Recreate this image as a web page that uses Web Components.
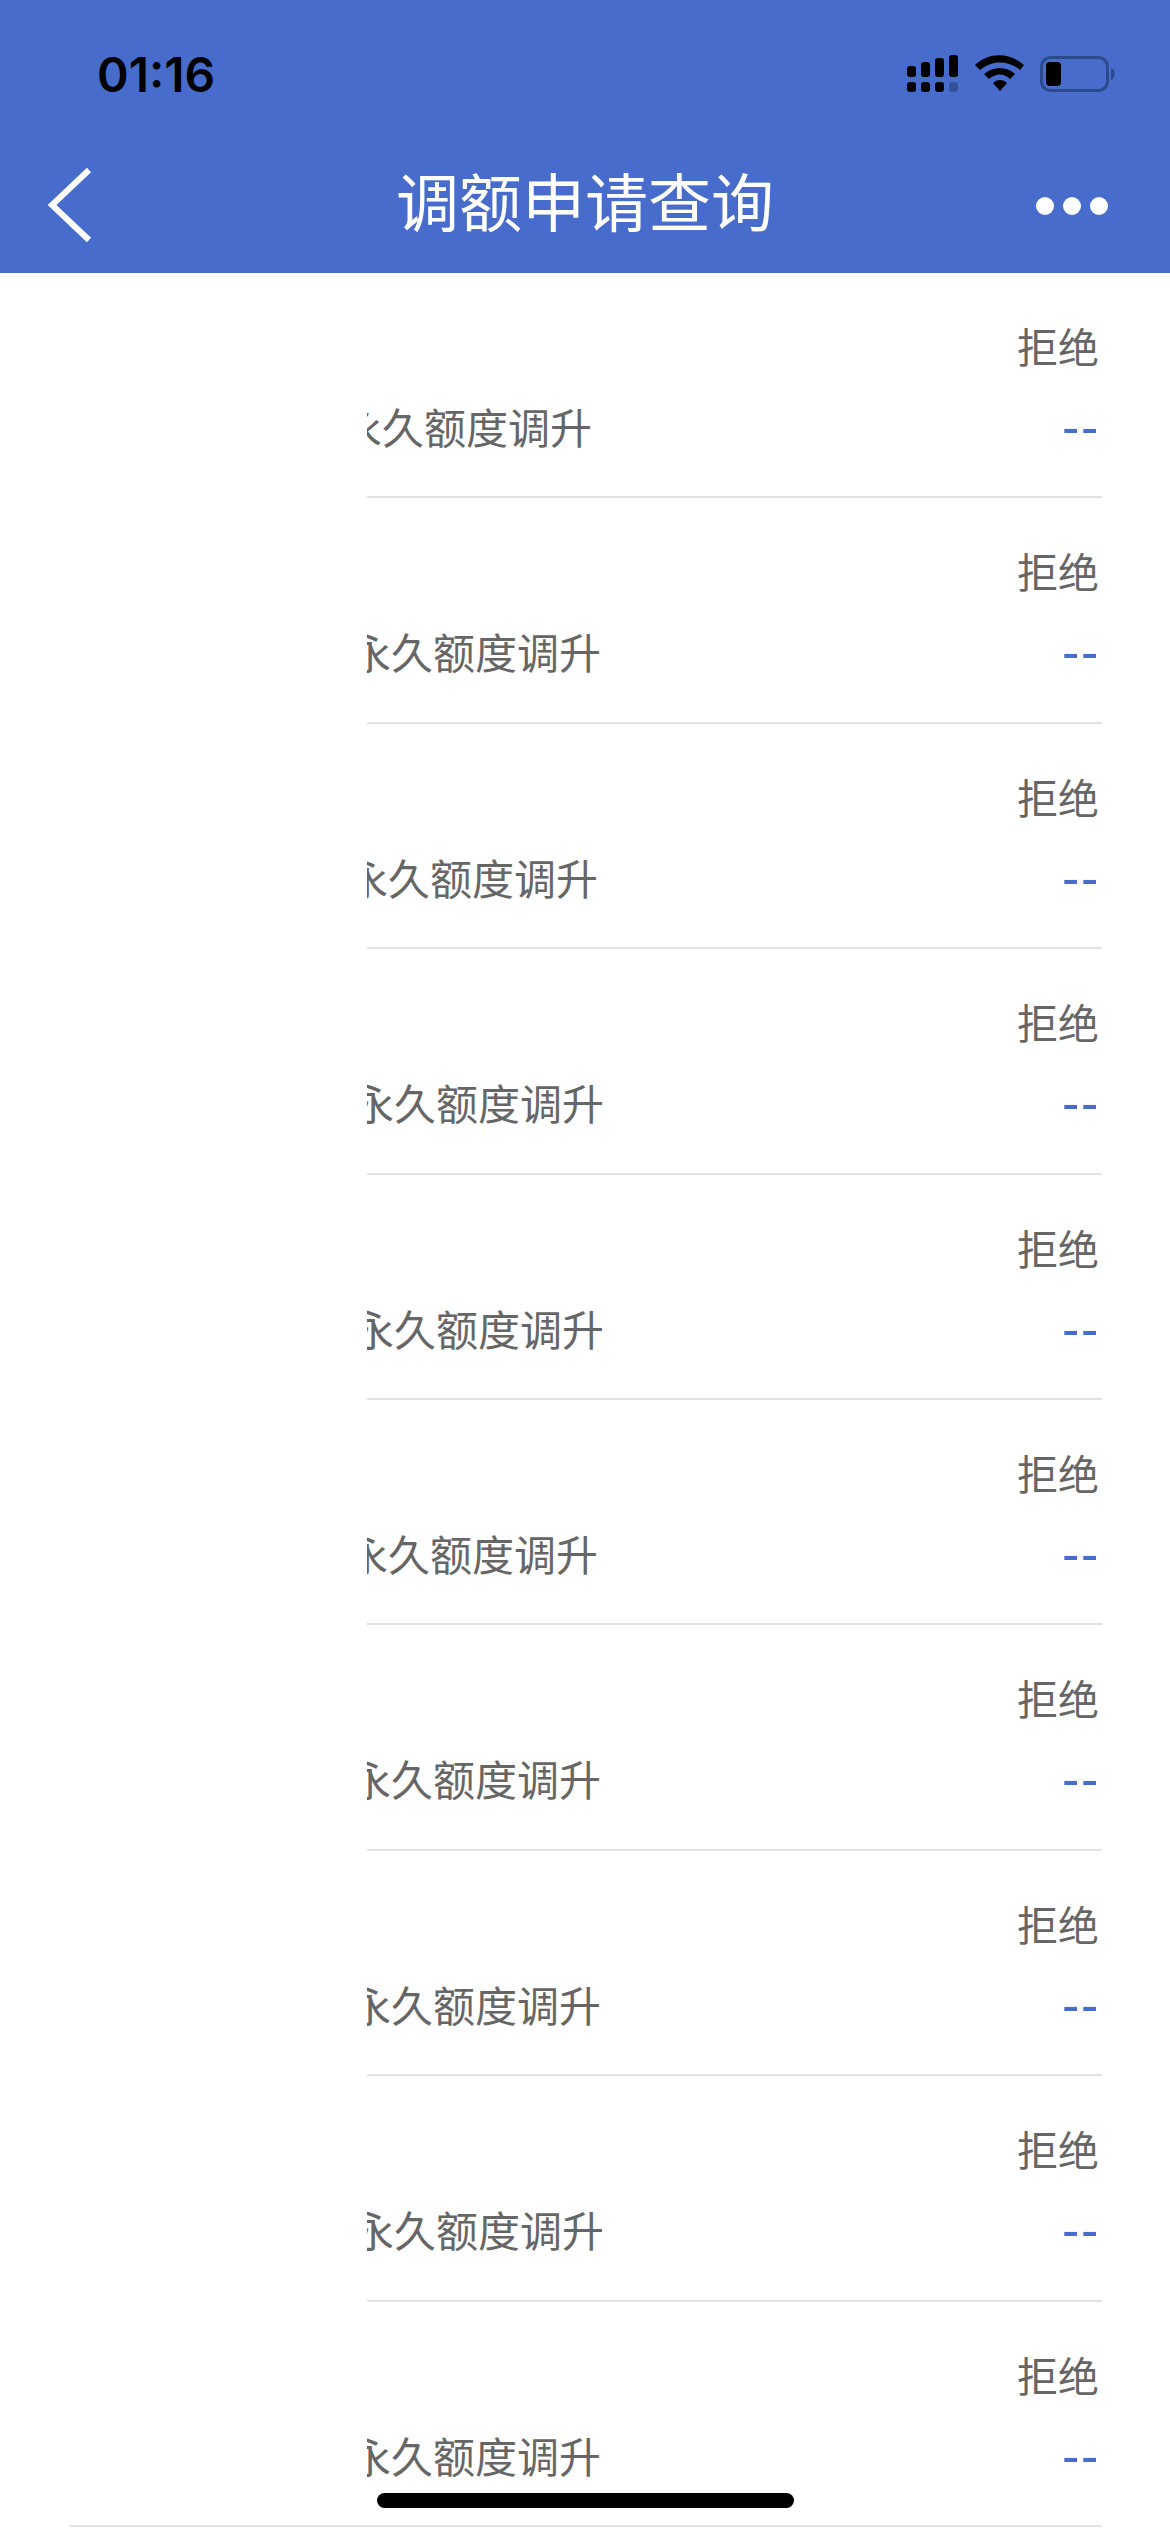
<!DOCTYPE html>
<html lang="zh">
<head>
<meta charset="utf-8">
<title>调额申请查询</title>
<style>
  html, body { margin: 0; padding: 0; background: #fff; }
  body { width: 1170px; height: 2532px; overflow: hidden; position: relative; }
</style>
</head>
<body>
<app-header title-text="调额申请查询" time="01:16"></app-header>
<quota-list id="list"></quota-list>
<home-indicator></home-indicator>

<script>
class StatusBar extends HTMLElement {
  constructor() {
    super();
    this.attachShadow({ mode: 'open' });
  }

  connectedCallback() {
    this.shadowRoot.innerHTML = `
      <style>
        :host { display: flex; height: 136px; box-sizing: border-box; padding: 0 39px 0 97px; align-items: flex-start; justify-content: space-between; }
        #time { font: 600 48px/1 Inter, "Liberation Sans", sans-serif; color: #000; margin-top: 51px; }
        svg { display: block; margin: 55px 0 0 0; }
      </style>
      <span id="time">${this.getAttribute('time') || ''}</span>
      <svg width="270" height="40" viewBox="0 0 270 40">
        <g fill="#000">
          <rect x="46" y="11" width="9" height="11" rx="3"/>
          <rect x="60" y="7" width="9" height="15" rx="3"/>
          <rect x="74" y="3" width="9" height="19" rx="3"/>
          <rect x="88" y="0" width="9" height="22" rx="3"/>
          <rect x="46" y="27" width="9" height="10" rx="3"/>
          <rect x="60" y="27" width="9" height="10" rx="3"/>
          <rect x="74" y="27" width="9" height="10" rx="3"/>
        </g>
        <rect x="88" y="27" width="9" height="10" rx="3" fill="#000" opacity=".25"/>
        <path d="M114 10 C128 -3 148 -3 163 10 L159 15 C147 5 131 5 119 15Z" fill="#000"/>
        <path d="M123 19 C132 11 146 11 154 19 L149 24 C143 18 135 18 128 24Z" fill="#000"/>
        <path d="M132 28 C136 24 142 24 146 28 L139 36Z" fill="#000"/>
        <rect x="180.500" y="2.500" width="66" height="33" rx="9" fill="none" stroke="#2c4a8e" stroke-width="3"/>
        <rect x="185" y="7" width="15" height="24" rx="4" fill="#000"/>
        <path d="M250 13 C255 14 255 23 250 25Z" fill="#2c4a8e"/>
      </svg>
    `;
  }
}

class AppHeader extends HTMLElement {
  constructor() {
    super();
    this.attachShadow({ mode: 'open' });
  }

  connectedCallback() {
    this.shadowRoot.innerHTML = `
      <style>
        :host { display: block; background: #476ccc; height: 273px; color: #fff; }
        #nav { display: grid; grid-template-columns: 160px 1fr 160px; align-items: center; height: 137px; }
        #back { display: block; margin-left: 46px; }
        #title { text-align: center; font: 400 63px/1 "Noto Sans CJK SC", sans-serif; margin-top: -12px; }
        #more { display: flex; gap: 9px; justify-content: flex-end; padding-right: 62px; margin-top: 3px; }
        #more i { width: 18px; height: 18px; border-radius: 50%; background: #fff; }
      </style>
      <status-bar time="${this.getAttribute('time') || ''}"></status-bar>
      <div id="nav">
        <svg id="back" width="46" height="76" viewBox="0 0 46 76">
          <path d="M43 3 L6 38 L43 73" fill="none" stroke="#fff" stroke-width="6"/>
        </svg>
        <div id="title">${this.getAttribute('title-text') || ''}</div>
        <div id="more"><i></i><i></i><i></i></div>
      </div>
    `;
  }
}

class QuotaRow extends HTMLElement {
  constructor() {
    super();
    this.attachShadow({ mode: 'open' });
  }

  connectedCallback() {
    const shift = this.getAttribute('shift') || 0;
    this.shadowRoot.innerHTML = `
      <style>
        :host { display: grid; height: 225.4px; box-sizing: border-box; padding-right: 68px; grid-template-columns: 367px minmax(0, 1fr) auto; grid-template-rows: 103px 1fr 2px; font: 400 42px/1 "Noto Sans CJK SC", sans-serif; color: #666; }
        #status { grid-column: 3; grid-row: 1; text-align: right; padding: 52px 3px 0 0; font-size: 41px; }
        #clip { grid-column: 2; grid-row: 2; overflow: hidden; padding-top: 29px; white-space: nowrap; }
        #type { display: inline-block; margin-left: ${-shift}px; }
        #amount { grid-column: 3; grid-row: 2; text-align: right; padding: 25px 2px 0 0; color: #476ccc; font: 400 52px/1 "Liberation Sans", sans-serif; letter-spacing: 1.7px; }
        #rule { grid-column: 1 / -1; grid-row: 3; background: #e2e2e2; margin-left: var(--rule-start, 367px); }
      </style>
      <div id="status"><slot name="status"></slot></div>
      <div id="clip"><span id="type"><slot name="type"></slot></span></div>
      <div id="amount"><slot name="amount"></slot></div>
      <div id="rule"></div>
    `;
  }
}

class QuotaList extends HTMLElement {
  constructor() {
    super();
    this.attachShadow({ mode: 'open' });
  }

  connectedCallback() {
    const shifts = [27, 18, 21, 15, 15, 21, 18, 18, 15, 18];
    this.shadowRoot.innerHTML = `
      <style>:host { display: block; }</style>
      ${shifts.map((s, i) => `
        <quota-row shift="${s}" ${i === shifts.length - 1 ? 'style="--rule-start:70px"' : ''}>
          <span slot="status">拒绝</span>
          <span slot="type">永久额度调升</span>
          <span slot="amount">--</span>
        </quota-row>`).join('')}
    `;
  }
}

class HomeIndicator extends HTMLElement {
  constructor() {
    super();
    this.attachShadow({ mode: 'open' });
  }

  connectedCallback() {
    this.shadowRoot.innerHTML = `
      <style>
        :host { display: block; position: absolute; left: 377px; top: 2493px; width: 417px; height: 15px; border-radius: 8px; background: #000; }
      </style>
    `;
  }
}

customElements.define('status-bar', StatusBar);
customElements.define('app-header', AppHeader);
customElements.define('quota-row', QuotaRow);
customElements.define('quota-list', QuotaList);
customElements.define('home-indicator', HomeIndicator);
</script>
</body>
</html>
